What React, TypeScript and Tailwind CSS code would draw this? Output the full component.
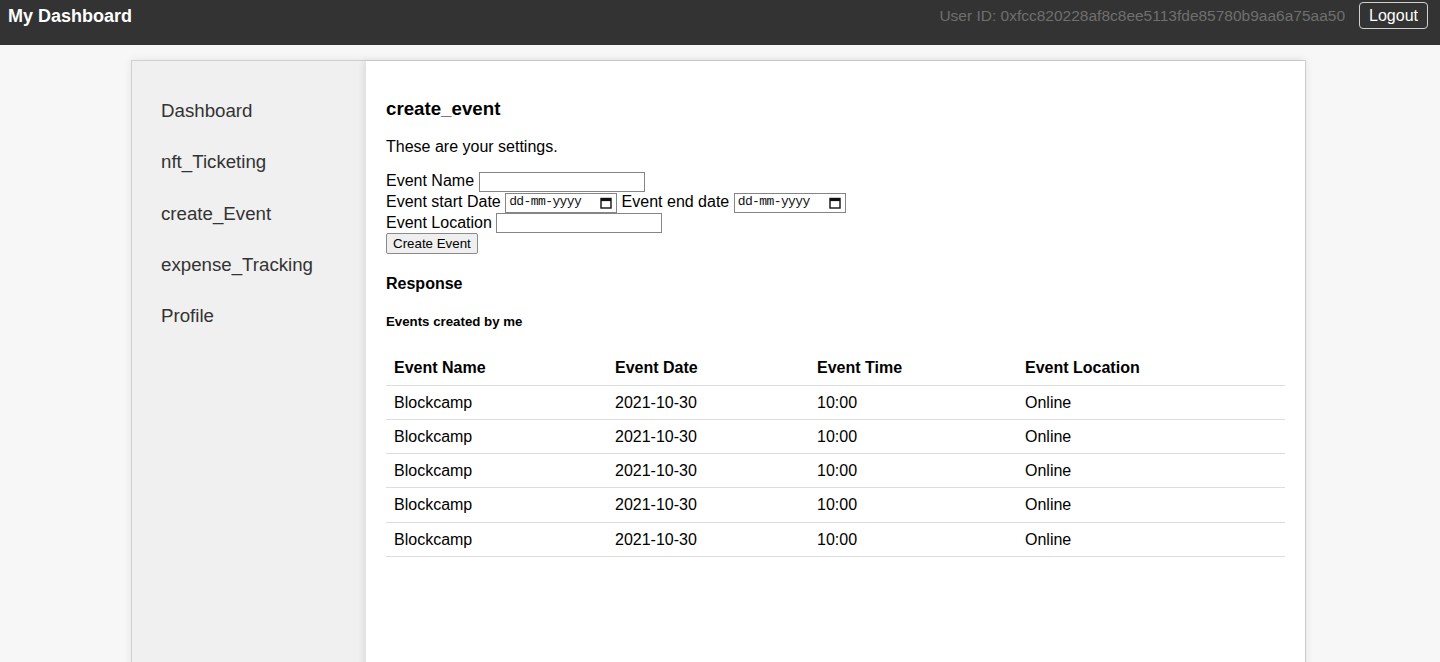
import { useState } from "react";

const navItems = ["Dashboard", "nft_Ticketing", "create_Event", "expense_Tracking", "Profile"];

const events = Array.from({ length: 5 }, () => ({
  name: "Blockcamp",
  date: "2021-10-30",
  time: "10:00",
  location: "Online",
}));

function CalendarIcon() {
  return (
    <svg width="12" height="12" viewBox="0 0 12 12" className="shrink-0">
      <rect x="1" y="1.5" width="10" height="9.5" fill="none" stroke="#111" strokeWidth="1.4" />
      <rect x="1" y="1.5" width="10" height="2.6" fill="#111" />
    </svg>
  );
}

function DateBox() {
  return (
    <span className="inline-flex items-center justify-between align-middle w-[112px] h-[20px] border border-[#858585] bg-white pl-[3px] pr-[4px]">
      <span className="text-[13px] text-[#111] font-['Liberation_Mono','DejaVu_Sans_Mono',monospace] tracking-[-0.6px]">dd-mm-yyyy</span>
      <CalendarIcon />
    </span>
  );
}

export default function App() {
  const [name, setName] = useState("");
  const [location, setLocation] = useState("");

  return (
    <div className="min-h-screen bg-[#f7f7f7] font-['Liberation_Sans',Arial,sans-serif] text-black">
      <header className="h-[45px] bg-[#333333] flex items-start justify-between pl-2 pr-3">
        <h1 className="text-[18px] font-bold text-white mt-[3px]">My Dashboard</h1>
        <div className="flex items-center gap-[14px] mt-[2px]">
          <span className="text-[15.5px] text-[#6f6f6f]">User ID: 0xfcc820228af8c8ee5113fde85780b9aa6a75aa50</span>
          <button className="h-[27px] px-[9px] text-[16px] text-white border border-[#d0d0d0] rounded-[4px] bg-transparent">
            Logout
          </button>
        </div>
      </header>

      <div className="w-[1175px] mt-[15px] ml-[131px] border border-[#cfcfcf] shadow-[0_0_8px_rgba(0,0,0,0.08)] flex min-h-[620px]">
        <aside className="w-[234px] shrink-0 bg-[#f0f0f0] pl-[29px] pt-[40px]">
          <ul className="flex flex-col gap-[32.3px]">
            {navItems.map((item) => (
              <li key={item} className="text-[18.7px] leading-[19px] text-[#333333]">
                {item}
              </li>
            ))}
          </ul>
        </aside>

        <main className="flex-1 bg-white px-5 pt-[37px] shadow-[-3px_0_6px_rgba(0,0,0,0.08)]">
          <h3 className="text-[18.72px] font-bold leading-[22px]">create_event</h3>
          <p className="text-[16px] leading-[18px] mt-[18px]">These are your settings.</p>

          <form className="mt-[15px] text-[16px] leading-[20.3px]" onSubmit={(e) => e.preventDefault()}>
            <div>
              Event Name{" "}
              <input
                value={name}
                onChange={(e) => setName(e.target.value)}
                className="align-middle w-[166px] h-[20px] border border-[#858585] bg-white"
              />
            </div>
            <div>
              Event start Date <DateBox /> Event end date <DateBox />
            </div>
            <div>
              Event Location{" "}
              <input
                value={location}
                onChange={(e) => setLocation(e.target.value)}
                className="align-middle w-[166px] h-[20px] border border-[#858585] bg-white"
              />
            </div>
            <button
              type="submit"
              className="block h-[21px] px-[6px] text-[13.33px] leading-none border border-[#8a8a8a] bg-[#efefef] rounded-[2px] text-black"
            >
              Create Event
            </button>
          </form>

          <h4 className="text-[16px] font-bold leading-[18px] mt-[21px]">Response</h4>
          <h5 className="text-[13.28px] font-bold leading-[15px] mt-[21px]">Events created by me</h5>

          <table className="w-full mt-[22px] border-collapse text-[16px] leading-[17.3px]">
            <thead>
              <tr className="border-b border-[#dddddd]">
                <th className="text-left font-bold py-[8px] px-[8px] w-[221px]">Event Name</th>
                <th className="text-left font-bold py-[8px] px-[8px] w-[202px]">Event Date</th>
                <th className="text-left font-bold py-[8px] px-[8px] w-[208px]">Event Time</th>
                <th className="text-left font-bold py-[8px] px-[8px]">Event Location</th>
              </tr>
            </thead>
            <tbody>
              {events.map((ev, i) => (
                <tr key={i} className="border-b border-[#dddddd]">
                  <td className="py-[8px] px-[8px]">{ev.name}</td>
                  <td className="py-[8px] px-[8px]">{ev.date}</td>
                  <td className="py-[8px] px-[8px]">{ev.time}</td>
                  <td className="py-[8px] px-[8px]">{ev.location}</td>
                </tr>
              ))}
            </tbody>
          </table>
        </main>
      </div>
    </div>
  );
}
